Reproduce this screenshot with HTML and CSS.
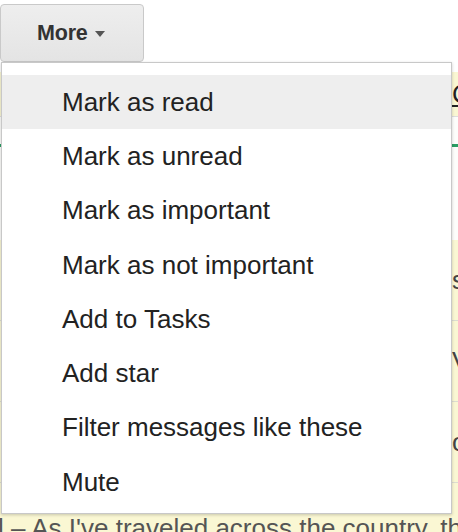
FILE: index.html
```html
<!DOCTYPE html>
<html>
<head>
<meta charset="utf-8">
<link rel="stylesheet" href="styles.css">
</head>
<body>
<div class="page">
  <div class="toolbar">
    <button class="more-btn"><span class="more-label">More</span><span class="caret"></span></button>
  </div>
  <div class="list">
    <div class="gap-top"></div>
    <div class="row row-yellow row-first"><span class="frag frag-link">C</span></div>
    <div class="row-white-a"></div>
    <div class="green-line"></div>
    <div class="row-white-b"></div>
    <div class="row row-yellow row-tall"><span class="frag">s</span></div>
    <div class="row row-yellow row-tall"><span class="frag">V</span></div>
    <div class="row row-yellow row-tall"><span class="frag">o</span></div>
    <div class="row row-yellow row-last"><span class="snippet">l – As I've traveled across the country, th</span></div>
  </div>

  <div class="menu">
    <div class="item active">Mark as read</div>
    <div class="item">Mark as unread</div>
    <div class="item">Mark as important</div>
    <div class="item">Mark as not important</div>
    <div class="item">Add to Tasks</div>
    <div class="item">Add star</div>
    <div class="item">Filter messages like these</div>
    <div class="item">Mute</div>
  </div>
</div>
</body>
</html>
```
FILE: styles.css
```css
html, body {
  margin: 0;
  padding: 0;
  background: #ffffff;
  width: 458px;
  height: 532px;
  overflow: hidden;
  font-family: "Liberation Sans", Arial, sans-serif;
}

.page {
  position: relative;
  width: 458px;
  height: 532px;
  overflow: hidden;
}

.toolbar {
  height: 62px;
  padding-top: 4px;
  box-sizing: border-box;
}

.more-btn {
  display: flex;
  align-items: center;
  width: 144px;
  height: 58px;
  margin: 0;
  padding: 0 0 0 36px;
  box-sizing: border-box;
  border: 1px solid #c9c9c9;
  border-radius: 4px;
  background: linear-gradient(#eeeeee, #e4e4e4);
  font-family: "Liberation Sans", Arial, sans-serif;
  font-weight: bold;
  font-size: 21.5px;
  color: #333333;
}

.more-label {
  letter-spacing: -0.2px;
}

.caret {
  width: 0;
  height: 0;
  margin-left: 7px;
  margin-top: 2px;
  border-left: 5.5px solid transparent;
  border-right: 5.5px solid transparent;
  border-top: 6px solid #555555;
}

.list {
  display: flex;
  flex-direction: column;
}

.gap-top {
  height: 10px;
}

.row {
  position: relative;
  overflow: hidden;
  white-space: nowrap;
  color: #333333;
  font-size: 26px;
}

.row-yellow {
  background: #faf7d3;
}

.row-first {
  height: 44px;
  border-bottom: 1px solid #dddddd;
  display: flex;
  align-items: center;
}

.row-white-a {
  height: 27px;
  background: #fdfdfb;
}

.green-line {
  height: 3px;
  background: #2a9d63;
}

.row-white-b {
  height: 93px;
  background: #fdfdfb;
}

.row-tall {
  height: 81px;
  border-bottom: 1px solid #dcdcd0;
  display: flex;
  align-items: center;
  box-sizing: border-box;
}

.row-last {
  height: 70px;
  padding-top: 30px;
  box-sizing: border-box;
}

.frag {
  margin-left: 452px;
  font-size: 26px;
  color: #444444;
}

.frag-link {
  text-decoration: underline;
  color: #222222;
}

.snippet {
  display: block;
  margin-left: -2px;
  color: #555555;
  font-size: 26px;
}

.menu {
  position: absolute;
  left: 1px;
  top: 62px;
  width: 451px;
  box-sizing: border-box;
  background: #ffffff;
  border: 1px solid #c8c8c8;
  box-shadow: 0 1px 3px rgba(0, 0, 0, 0.2);
  padding: 12px 0 4px 0;
}

.item {
  height: 54.3px;
  display: flex;
  align-items: center;
  padding-left: 60px;
  font-size: 26px;
  color: #222222;
}

.item.active {
  background: #eeeeee;
}
```
